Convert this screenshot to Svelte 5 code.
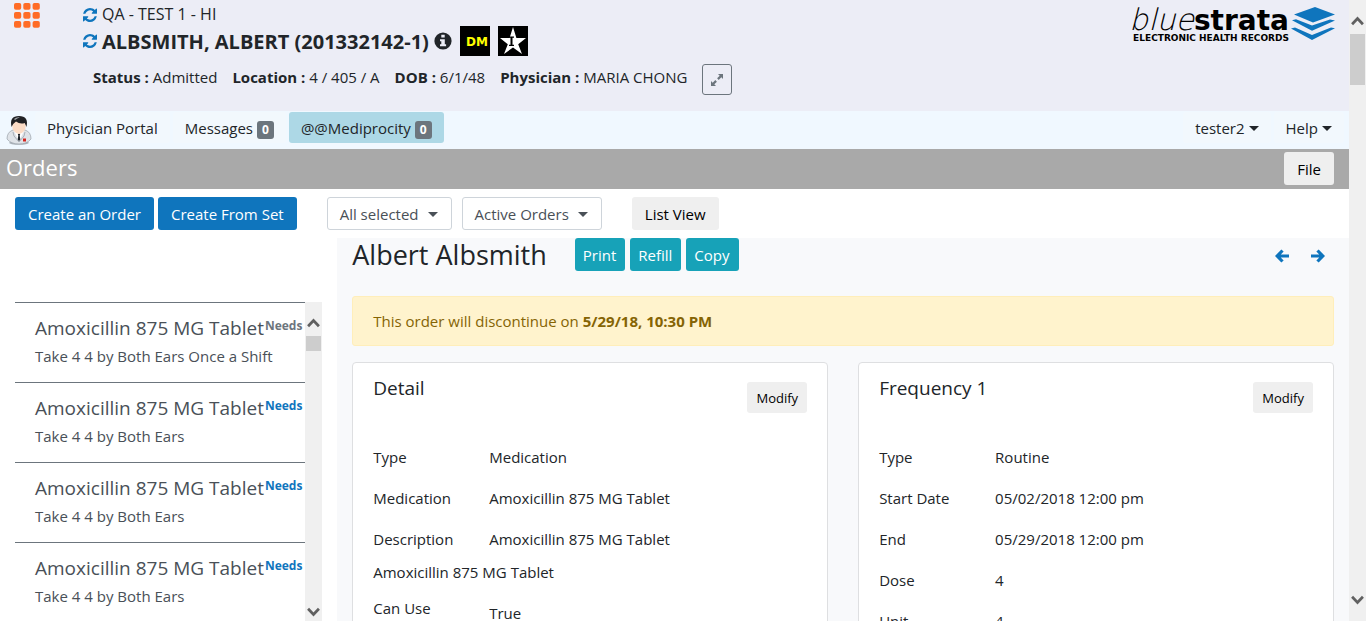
<script>
  const facts = [
    ['Status', 'Admitted'],
    ['Location', '4 / 405 / A'],
    ['DOB', '6/1/48'],
    ['Physician', 'MARIA CHONG']
  ];
  const orders = [
    { name: 'Amoxicillin 875 MG Tablet', note: 'Take 4 4 by Both Ears Once a Shift', muted: true },
    { name: 'Amoxicillin 875 MG Tablet', note: 'Take 4 4 by Both Ears' },
    { name: 'Amoxicillin 875 MG Tablet', note: 'Take 4 4 by Both Ears' },
    { name: 'Amoxicillin 875 MG Tablet', note: 'Take 4 4 by Both Ears' }
  ];
  const detail = [
    ['Type', 'Medication'],
    ['Medication', 'Amoxicillin 875 MG Tablet'],
    ['Description', 'Amoxicillin 875 MG Tablet']
  ];
  const frequency = [
    ['Type', 'Routine'],
    ['Start Date', '05/02/2018 12:00 pm'],
    ['End', '05/29/2018 12:00 pm'],
    ['Dose', '4'],
    ['Unit', '4']
  ];
</script>

{#snippet refresh()}
  <svg class="refresh" viewBox="0 0 1536 1536" aria-hidden="true">
    <path d="M1511 928q0 5-1 7-64 268-268 434.500T764 1536q-146 0-282.500-55T238 1324l-129 129q-19 19-45 19t-45-19-19-45V960q0-26 19-45t45-19h448q26 0 45 19t19 45-19 45l-137 137q71 66 161 102t187 36q134 0 250-65t186-179q11-17 53-117 8-23 30-23h192q13 0 22.500 9.500t9.500 22.500zM1536 128v448q0 26-19 45t-45 19h-448q-26 0-45-19t-19-45 19-45l138-138Q969 256 768 256q-134 0-250 65T332 500q-11 17-53 117-8 23-30 23H50q-13 0-22.500-9.500T18 608v-7q65-268 270-434.500T768 0q146 0 284 55.500T1297 212l130-129q19-19 45-19t45 19 19 45z" />
  </svg>
{/snippet}

{#snippet chevron(dir)}
  <svg class="chevron" class:down={dir === 'down'} viewBox="0 0 12 9" aria-hidden="true">
    <path d="M1 7.500 6 2.200l5 5.300" />
  </svg>
{/snippet}

{#snippet card(title, rows, extra)}
  <section class="card">
    <header>
      <h3>{title}</h3>
      <button class="btn plain small">Modify</button>
    </header>
    <dl>
      {#each rows as [label, value]}
        <div class="row"><dt>{label}</dt><dd>{value}</dd></div>
      {/each}
    </dl>
    {#if extra}
      <p>Amoxicillin 875 MG Tablet</p>
      <dl>
        <div class="row tall"><dt>Can Use</dt><dd>True</dd></div>
      </dl>
    {/if}
  </section>
{/snippet}

<div class="window">
  <div class="page">
    <header class="banner">
      <button class="apps" aria-label="Applications">
        <svg viewBox="0 0 26 25" aria-hidden="true">
          {#each [0, 9, 18] as y}
            {#each [0, 9.300, 18.600] as x}
              <rect {x} {y} width="7.200" height="6.800" rx="1.800" />
            {/each}
          {/each}
        </svg>
      </button>
      <div class="patient">
        <div class="facility">{@render refresh()}<span>QA - TEST 1 - HI</span></div>
        <div class="who">
          {@render refresh()}
          <h1>ALBSMITH, ALBERT (201332142-1)</h1>
          <svg class="info" viewBox="0 0 18 18" aria-hidden="true">
            <circle cx="9" cy="9" r="8.600" fill="#212529" />
            <path d="M7.300 2.800h3.400v2.700H7.300zM6 7.300h4.800v5h1.300v2H6v-2h1.300v-3H6z" fill="#ecedf6" />
          </svg>
          <span class="tag dm">DM</span>
          <span class="tag">
            <svg viewBox="0 0 30 30" aria-hidden="true">
              <path d="m15 1 3.400 11H28l-7.800 6.200L24 28l-9-6.500L6 28l3.800-9.800L2 12h9.600z" fill="#fff" />
              <path d="M11 10.500h5v1.300h-1.500v7H16v1.300h-5v-1.300h1.500v-7H11z" fill="#000" />
            </svg>
          </span>
        </div>
        <div class="facts">
          {#each facts as [label, value]}
            <span><b>{label} :</b> {value}</span>
          {/each}
          <button class="expand" aria-label="Expand">
            <svg viewBox="0 0 14 14" aria-hidden="true">
              <path d="M8 1h5v5l-1.700-1.700-2.600 2.600-1.600-1.600 2.600-2.600zM6 13H1V8l1.700 1.700 2.600-2.600 1.600 1.600-2.600 2.600z" />
            </svg>
          </button>
        </div>
      </div>
      <div class="logo">
        <div class="words">
          <div class="brand"><i>blue</i><b>strata</b></div>
          <div class="tagline">ELECTRONIC HEALTH RECORDS</div>
        </div>
        <svg viewBox="0 0 44 34" aria-hidden="true">
          <path d="M24 0 44 7.600 22 15.500 3 7.600zM1 13.200l4-.9L21 18.500l18-6 5 1L21 23.800zM0 21.500l4-1L21 28l19-7.500 4 .8L21 33z" fill="#0f75bd" />
        </svg>
      </div>
    </header>

    <nav>
      <svg class="doctor" viewBox="0 0 26 30" aria-hidden="true">
        <ellipse cx="13" cy="27.800" rx="10" ry="2" fill="#a9b1b9" />
        <path d="M1 24q0-7 6-9l6-1 6 1q6 2 6 9-4 5-12 5T1 24z" fill="#dfe3e8" stroke="#a2a9b1" stroke-width=".8" />
        <path d="m8 16 5 10 5-10-5-1z" fill="#fff" />
        <path d="m11.800 19 1.200-.8 1.200.8-.5 1.600.6 4-1.300 1.600-1.300-1.600.6-4z" fill="#1f2329" />
        <path d="m7 17 1 4 5 6M19 17l-1 4-5 6" fill="none" stroke="#9aa2ab" stroke-width=".8" />
        <path d="M6.200 10q0-5 6.800-5t6.800 5q0 8-6.800 9-6.800-1-6.800-9z" fill="#fbdcc6" />
        <path d="M5.500 12Q3 1 13 1t7.500 11l-1.800-4Q14 9.500 10 6.500 7.500 8 5.500 12z" fill="#202124" />
        <path d="M8 4q3-2.500 6-1.500-2 .3-5 2.500z" fill="#a3a6aa" />
        <path d="M17 23.500h3v3h-3z" fill="#d5241f" />
      </svg>
      <a href="#portal">Physician Portal</a>
      <a href="#messages">Messages <span class="badge">0</span></a>
      <a href="#mediprocity" class="active">@@Mediprocity <span class="badge">0</span></a>
      <button class="menu end">tester2<span class="caret"></span></button>
      <button class="menu">Help<span class="caret"></span></button>
    </nav>

    <div class="titlebar">
      <h2>Orders</h2>
      <button class="btn plain">File</button>
    </div>

    <div class="toolbar">
      <div class="group create">
        <button class="btn primary">Create an Order</button>
        <button class="btn primary">Create From Set</button>
      </div>
      <div class="group filters">
        <button class="btn outline">All selected<span class="caret"></span></button>
        <button class="btn outline">Active Orders<span class="caret"></span></button>
      </div>
      <button class="btn plain">List View</button>
    </div>

    <main>
      <aside>
        <div class="scroller">
          <ul>
            {#each orders as order}
              <li>
                <div class="name"><span>{order.name}</span><b class:muted={order.muted}>Needs</b></div>
                <div class="note">{order.note}</div>
              </li>
            {/each}
          </ul>
          <div class="scrollbar inner">
            {@render chevron('up')}<div class="thumb"></div>{@render chevron('down')}
          </div>
        </div>
      </aside>

      <div class="order">
        <div class="heading">
          <h2>Albert Albsmith</h2>
          <div class="actions">
            <button class="btn info-btn">Print</button>
            <button class="btn info-btn">Refill</button>
            <button class="btn info-btn">Copy</button>
          </div>
          <div class="pager">
            <button aria-label="Previous order">
              <svg viewBox="0 0 14 14" aria-hidden="true"><path d="M7.500 1.500 2.200 7l5.300 5.500M2.500 7H14" /></svg>
            </button>
            <button aria-label="Next order">
              <svg viewBox="0 0 14 14" aria-hidden="true"><path d="M6.500 1.500 11.800 7l-5.300 5.500M11.500 7H0" /></svg>
            </button>
          </div>
        </div>
        <div class="alert">This order will discontinue on <b>5/29/18, 10:30 PM</b></div>
        <div class="cards">
          {@render card('Detail', detail, true)}
          {@render card('Frequency 1', frequency, false)}
        </div>
      </div>
    </main>
  </div>

  <div class="scrollbar outer">
    {@render chevron('up')}<div class="thumb"></div>{@render chevron('down')}
  </div>
</div>

<style>
  :global(body) {
    margin: 0;
    overflow: hidden;
  }
  .window, .window * { box-sizing: border-box; }
  .window {
    display: flex;
    height: 100vh;
    overflow: hidden;
    font: 15px/23px "Open Sans", "Noto Sans", sans-serif;
    color: #212529;
    background: #fff;
  }
  .page {
    flex: 1;
    min-width: 0;
    display: flex;
    flex-direction: column;
  }
  h1, h2, h3, p, dl, dd, ul { margin: 0; padding: 0; font-weight: 400; }
  button { font: inherit; color: inherit; border: 0; background: none; padding: 0; }
  svg { display: block; flex: none; }

  .banner {
    display: flex;
    height: 111px;
    padding: 3px 14px;
    background: #ecedf6;
  }
  .apps { width: 26px; height: 25px; }
  .apps svg { width: 26px; height: 25px; fill: #ff6c26; }
  .patient { flex: 1; padding-left: 43px; }
  .facility, .who, .facts { display: flex; align-items: center; white-space: nowrap; }
  .facility { height: 23px; gap: 5px; font-size: 16px; }
  .who { height: 30px; }
  .who h1 { margin: 0 5px; font-size: 20px; font-weight: 700; }
  .refresh { width: 14px; height: 14px; fill: #0f75bd; }
  .info { width: 18px; height: 18px; }
  .tag {
    width: 30px;
    height: 30px;
    margin-left: 8px;
    background: #000;
  }
  .dm {
    padding-right: 2px;
    color: #ff0;
    font: bold 12px/32px "DejaVu Sans", sans-serif;
    text-align: right;
  }
  .facts { height: 31px; margin-top: 8px; padding-left: 10px; gap: 15px; }
  .facts span { padding-bottom: 4px; }
  .expand {
    display: grid;
    place-items: center;
    width: 30px;
    height: 31px;
    border: 1px solid #6c757d;
    border-radius: 3px;
  }
  .expand svg { width: 14px; height: 14px; fill: #6c757d; }
  .logo { display: flex; gap: 2px; padding-top: 4px; color: #000; }
  .logo svg { width: 44px; height: 34px; }
  .brand {
    height: 25px;
    font: 28px/25px "DejaVu Sans", sans-serif;
    text-align: right;
  }
  .brand i {
    font-family: "DejaVu Sans Light", "DejaVu Sans", sans-serif;
    font-size: 30px;
    font-weight: 200;
  }
  .tagline { font: bold 9px/12px "DejaVu Sans", sans-serif; text-align: right; }

  nav {
    display: flex;
    height: 38px;
    padding: 1px 5px 0 6px;
    gap: 3px;
    background: #f0f8ff;
  }
  .doctor { width: 26px; height: 30px; margin-top: 3px; }
  nav a, .menu {
    height: 31px;
    padding: 0 12px;
    border-radius: 3px;
    line-height: 32px;
    color: #212529;
    text-decoration: none;
    white-space: nowrap;
    background: #f2f8fd;
  }
  nav a.active { background: #add8e6; }
  .badge {
    display: inline-block;
    min-width: 17px;
    padding: 0 4px;
    border-radius: 3px;
    background: #6c757d;
    color: #fff;
    font-size: 12px;
    font-weight: 700;
    line-height: 18px;
    text-align: center;
  }
  .end { margin-left: auto; }
  .caret {
    display: inline-block;
    margin-left: 4px;
    border: 5px solid transparent;
    border-top-color: currentColor;
    border-bottom: 0;
    vertical-align: 3px;
  }

  .titlebar {
    display: flex;
    justify-content: space-between;
    height: 40px;
    padding: 3px 15px 0 6px;
    background: #a9a9a9;
    color: #fff;
  }
  .titlebar h2 { font-size: 22px; line-height: 31px; }
  .btn {
    height: 33px;
    padding: 1px 12px 0;
    border: 1px solid transparent;
    border-radius: 3px;
    white-space: nowrap;
  }
  .plain { background: #efefef; color: #000; }
  .small { height: 31px; padding: 1px 8px 0; font-size: 13px; }
  .primary { background: #0f75bd; color: #fff; }
  .outline { padding: 1px 13px 0 12px; border-color: #ced4da; color: #495057; background: #fff; }
  .outline .caret { margin-left: 9px; }
  .info-btn { padding: 1px 8px 0 7px; background: #17a2b8; color: #fff; }

  .toolbar {
    display: flex;
    align-items: center;
    height: 49px;
    padding: 0 15px;
    gap: 30px;
  }
  .group { display: flex; gap: 4px; }
  .filters { gap: 10px; }

  main { flex: 1; min-height: 0; display: flex; }
  aside { width: 25%; padding: 64px 15px 0; }
  .scroller { display: flex; height: 100%; }
  ul { flex: 1; min-width: 0; overflow: hidden; list-style: none; }
  li {
    height: 80px;
    padding: 14px 0 0 20px;
    border-top: 1px solid #6c757d;
    color: #495057;
    white-space: nowrap;
  }
  .name { display: flex; font-size: 19px; }
  .name b { padding-left: 1px; font-size: 12px; line-height: 17px; color: #0f75bd; }
  .name .muted { color: #6c757d; }
  .note { margin-top: 5px; }

  .scrollbar {
    display: flex;
    flex-direction: column;
    flex: none;
    width: 17px;
    background: #f0f0f0;
  }
  .chevron { width: 13px; height: 10px; margin: 0 auto; fill: none; stroke: #606060; stroke-width: 2.500; }
  .down { margin-top: auto; transform: rotate(180deg); }
  .thumb { width: 15px; margin: 0 auto; background: #cdcdcd; }
  .inner { padding: 16px 0 4px; }
  .inner .thumb { height: 15px; margin-top: 8px; }
  .outer { padding: 16px 0; }
  .outer .thumb { height: 51px; margin-top: 8px; }

  .order { flex: 1; min-width: 0; padding: 0 15px; overflow: hidden; background: #f8f9fb; }
  .heading { display: flex; align-items: center; height: 58px; padding-bottom: 25px; }
  .heading h2 { font-size: 27px; line-height: 36px; }
  .actions { display: flex; gap: 5px; margin-left: 28px; }
  .pager { display: flex; gap: 22px; margin-left: auto; padding: 2px 9px 0 0; }
  .pager svg { width: 14px; height: 14px; fill: none; stroke: #0f75bd; stroke-width: 3.200; }
  .alert {
    padding: 13px 20px;
    border: 1px solid #ffeeba;
    border-radius: 3px;
    background: #fff3cd;
    color: #856404;
    line-height: 22px;
  }
  .cards { display: grid; grid-template-columns: 1fr 1fr; gap: 30px; margin-top: 16px; }
  .card {
    min-width: 0;
    padding: 12px 20px;
    border: 1px solid #dedfe1;
    border-radius: 4px;
    background: #fff;
  }
  .card header { display: flex; justify-content: space-between; height: 62px; }
  .card h3 { font-size: 19px; line-height: 26px; }
  .card header .btn { margin-top: 7px; }
  .row {
    display: grid;
    grid-template-columns: 1fr 3fr;
    height: 41px;
    margin-right: -30px;
    align-items: center;
  }
  .card p { line-height: 24px; }
  .tall { align-items: start; height: 64px; }
  .tall dt { padding-top: 13px; }
  .tall dd { padding-top: 18px; }
</style>
